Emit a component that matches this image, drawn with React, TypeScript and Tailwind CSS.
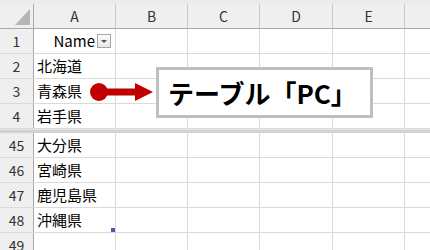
const font = "font-['Noto_Sans_CJK_JP','Noto_Sans',sans-serif]";

const colWidths = ["w-[82px]", "w-[72px]", "w-[72px]", "w-[73px]", "w-[72px]"];
const colLetters = ["A", "B", "C", "D", "E"];

const topRows = [
  { n: "1", a: "Name", header: true },
  { n: "2", a: "北海道" },
  { n: "3", a: "青森県" },
  { n: "4", a: "岩手県" },
];

const bottomRows = [
  { n: "45", a: "大分県" },
  { n: "46", a: "宮崎県" },
  { n: "47", a: "鹿児島県" },
  { n: "48", a: "沖縄県" },
  { n: "49", a: "" },
];

type Row = { n: string; a: string; header?: boolean };

const SheetRow = ({ row }: { row: Row }) => (
  <div className="flex h-[25px] shrink-0 border-b border-[#dadada]">
    <div className="flex w-[34px] shrink-0 items-center justify-center border-r border-[#a9a9a9] bg-[#efefef] text-[14px] text-[#333]">
      {row.n}
    </div>
    {colWidths.map((w, i) => (
      <div key={i} className={`${w} flex shrink-0 items-center border-r border-[#dadada] text-[15px] text-black`}>
        {i === 0 && row.header && (
          <div className="flex w-full items-center justify-end gap-[2px] pr-[4px]">
            <span>{row.a}</span>
            <span className="flex h-[14px] w-[14px] items-center justify-center border border-[#a6a6a6] bg-gradient-to-b from-[#fafafa] to-[#e8e8e8]">
              <span className="h-0 w-0 border-x-[3px] border-t-[3px] border-x-transparent border-t-[#555]" />
            </span>
          </div>
        )}
        {i === 0 && !row.header && <span className="pl-[3px]">{row.a}</span>}
      </div>
    ))}
    <div className="flex-1" />
  </div>
);

export default function App() {
  return (
    <div className={`relative flex h-[250px] w-[430px] flex-col overflow-hidden bg-white ${font}`}>
      <div className="h-[4px] shrink-0 bg-[#e9ebee]" />

      {/* column headers */}
      <div className="flex h-[25px] shrink-0 border-b border-[#a9a9a9] bg-[#efefef]">
        <div className="flex w-[34px] shrink-0 items-end justify-end border-r border-[#a9a9a9] pb-[3px] pr-[3px]">
          <div className="h-[16px] w-[15px] bg-[#b5b5b5] [clip-path:polygon(100%_0,100%_100%,0_100%)]" />
        </div>
        {colWidths.map((w, i) => (
          <div key={i} className={`${w} flex shrink-0 items-center justify-center border-r border-[#c8c8c8] text-[14px] text-[#333]`}>
            {colLetters[i]}
          </div>
        ))}
        <div className="flex-1" />
      </div>

      {topRows.map((r) => (
        <SheetRow key={r.n} row={r} />
      ))}

      {/* frozen/hidden rows split */}
      <div className="h-[1px] shrink-0 bg-[#e6e6e6]" />
      <div className="h-[3px] shrink-0 bg-[#d2d2d2]" />

      {bottomRows.map((r) => (
        <SheetRow key={r.n} row={r} />
      ))}

      {/* table resize handle */}
      <div className="absolute left-[111px] top-[228px] h-[4px] w-[4px] bg-[#4a5ab8]" />

      {/* arrow */}
      <svg className="absolute left-0 top-0" width="430" height="250">
        <circle cx="99" cy="92" r="9" fill="#c00000" />
        <rect x="99" y="88.5" width="37" height="7" fill="#c00000" />
        <polygon points="135,83 153,92 135,101" fill="#c00000" />
      </svg>

      {/* callout */}
      <div className="absolute left-[156px] top-[67px] flex h-[51px] w-[217px] items-center border-[3px] border-[#bfbfbf] bg-white pl-[9px]">
        <span className="text-[26px] font-bold leading-none text-black">テーブル「PC」</span>
      </div>
    </div>
  );
}
